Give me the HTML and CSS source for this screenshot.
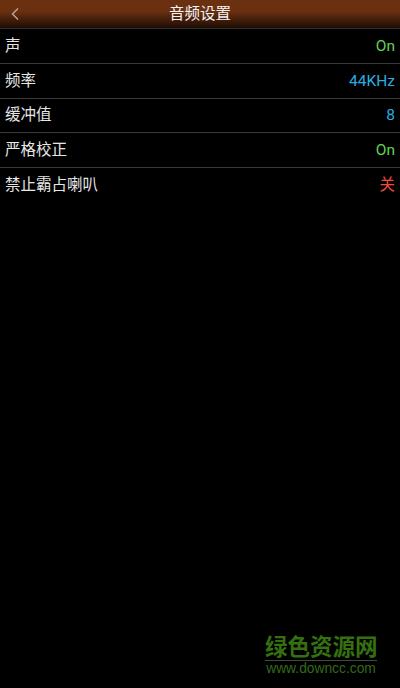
FILE: index.html

```html
<!DOCTYPE html>
<html lang="zh-CN">
<head>
    <meta charset="UTF-8">
    <meta name="viewport" content="width=device-width, initial-scale=1.0">
    <title>音频设置</title>
    <link rel="stylesheet" href="styles.css">
</head>
<body>
    <header class="title-bar">
        <svg class="back" width="10" height="14" viewBox="0 0 10 14">
            <path d="M8 1.5 L2.5 7 L8 12.5" fill="none" stroke="#b9a596" stroke-width="1.5"/>
        </svg>
        <h1>音频设置</h1>
    </header>
    <ul class="settings">
        <li><span>声</span><span class="green">On</span></li>
        <li><span>频率</span><span class="blue">44KHz</span></li>
        <li><span>缓冲值</span><span class="blue">8</span></li>
        <li><span>严格校正</span><span class="green">On</span></li>
        <li><span>禁止霸占喇叭</span><span class="red">关</span></li>
    </ul>
    <div class="watermark">
        <div class="watermark-name">绿色资源网</div>
        <div class="watermark-url">www.downcc.com</div>
    </div>
</body>
</html>
```

FILE: styles.css

```css
html, body {
    height: 100%;
}
body {
    margin: 0;
    background: #000;
    color: #e6e6e6;
    font-family: Roboto, "Noto Sans CJK SC", sans-serif;
    overflow: hidden;
}
.title-bar {
    position: relative;
    height: 28px;
    display: flex;
    align-items: center;
    justify-content: center;
    background: linear-gradient(#6b3010 0%, #6b3010 40%, #2a1206 90%, #1a0c05 100%);
    border-bottom: 1px solid #2e2e2e;
}
.title-bar h1 {
    margin: 0;
    font-size: 15.5px;
    line-height: 18px;
    font-weight: normal;
    color: #f2f2f2;
}
.back {
    position: absolute;
    left: 10px;
    top: 7px;
}
.settings {
    list-style: none;
    margin: 0;
    padding: 0;
}
.settings li {
    display: flex;
    justify-content: space-between;
    align-items: center;
    box-sizing: border-box;
    height: 34.75px;
    padding: 0 5px;
    font-size: 15.5px;
    line-height: 18px;
    border-bottom: 1px solid #3a3a3a;
}
.settings li:last-child {
    border-bottom: none;
}
.green {
    color: #62d25a;
}
.blue {
    color: #2aaee0;
}
.red {
    color: #f04a3e;
}
.watermark {
    position: absolute;
    right: 23px;
    bottom: 11px;
    width: 112px;
    text-align: center;
}
.watermark-name {
    font-size: 22.5px;
    line-height: 26px;
    font-weight: bold;
    color: #35700f;
    white-space: nowrap;
    border-bottom: 1px solid #3f4a38;
}
.watermark-url {
    font-family: "Liberation Sans", sans-serif;
    font-size: 13.8px;
    line-height: 16px;
    color: #35691a;
    white-space: nowrap;
}
```
